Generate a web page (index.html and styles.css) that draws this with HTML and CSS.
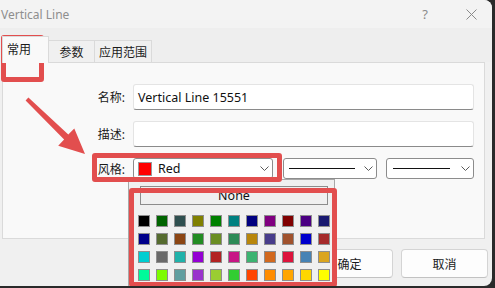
FILE: index.html
```html
<!DOCTYPE html>
<html>
<head>
<meta charset="utf-8">
<link rel="stylesheet" href="styles.css">
</head>
<body>
<div class="window">
  <div class="titlebar">
    <span class="title">Vertical Line</span>
    <span class="cap-btn help">?</span>
    <span class="cap-btn close">
      <svg width="11" height="11" viewBox="0 0 11 11"><path d="M0.5 0.5 L10.5 10.5 M10.5 0.5 L0.5 10.5" stroke="#8a8a8a" stroke-width="1" fill="none"/></svg>
    </span>
  </div>
  <div class="tabs">
    <div class="tab active">常用</div>
    <div class="tab t2">参数</div>
    <div class="tab t3">应用范围</div>
  </div>
  <div class="panel">
    <div class="row">
      <label class="lbl">名称:</label>
      <div class="input">Vertical Line 15551</div>
    </div>
    <div class="row">
      <label class="lbl">描述:</label>
      <div class="input"></div>
    </div>
    <div class="row row-style">
      <label class="lbl">风格:</label>
      <div class="combo c1">
        <span class="swatch-red"></span>
        <span class="combo-text">Red</span>
        <svg class="chev" width="9" height="5" viewBox="0 0 9 5"><path d="M0.5 0.5 L4.5 4.5 L8.5 0.5" stroke="#5a5a5a" stroke-width="1" fill="none"/></svg>
      </div>
      <div class="combo c2">
        <span class="line-sample"></span>
        <svg class="chev" width="9" height="5" viewBox="0 0 9 5"><path d="M0.5 0.5 L4.5 4.5 L8.5 0.5" stroke="#5a5a5a" stroke-width="1" fill="none"/></svg>
      </div>
      <div class="combo c3">
        <span class="line-sample"></span>
        <svg class="chev" width="9" height="5" viewBox="0 0 9 5"><path d="M0.5 0.5 L4.5 4.5 L8.5 0.5" stroke="#5a5a5a" stroke-width="1" fill="none"/></svg>
      </div>
    </div>
  </div>
  <div class="footer">
    <div class="btn">确定</div>
    <div class="btn">取消</div>
  </div>

  <div class="popup">
    <div class="none-btn">None</div>
    <div class="palette">
      <span class="sw" style="background:#000000"></span>
      <span class="sw" style="background:#006400"></span>
      <span class="sw" style="background:#2f4f4f"></span>
      <span class="sw" style="background:#808000"></span>
      <span class="sw" style="background:#008000"></span>
      <span class="sw" style="background:#008080"></span>
      <span class="sw" style="background:#000080"></span>
      <span class="sw" style="background:#800080"></span>
      <span class="sw" style="background:#800000"></span>
      <span class="sw" style="background:#4b0082"></span>
      <span class="sw" style="background:#191970"></span>
      <span class="sw" style="background:#00008b"></span>
      <span class="sw" style="background:#556b2f"></span>
      <span class="sw" style="background:#8b4513"></span>
      <span class="sw" style="background:#228b22"></span>
      <span class="sw" style="background:#6b8e23"></span>
      <span class="sw" style="background:#2e8b57"></span>
      <span class="sw" style="background:#b8860b"></span>
      <span class="sw" style="background:#483d8b"></span>
      <span class="sw" style="background:#a0522d"></span>
      <span class="sw" style="background:#0000cd"></span>
      <span class="sw" style="background:#a52a2a"></span>
      <span class="sw" style="background:#00ced1"></span>
      <span class="sw" style="background:#696969"></span>
      <span class="sw" style="background:#20b2aa"></span>
      <span class="sw" style="background:#9400d3"></span>
      <span class="sw" style="background:#b22222"></span>
      <span class="sw" style="background:#c71585"></span>
      <span class="sw" style="background:#3cb371"></span>
      <span class="sw" style="background:#d2691e"></span>
      <span class="sw" style="background:#dc143c"></span>
      <span class="sw" style="background:#4682b4"></span>
      <span class="sw" style="background:#daa520"></span>
      <span class="sw" style="background:#00fa9a"></span>
      <span class="sw" style="background:#7cfc00"></span>
      <span class="sw" style="background:#5f9ea0"></span>
      <span class="sw" style="background:#9932cc"></span>
      <span class="sw" style="background:#9acd32"></span>
      <span class="sw" style="background:#32cd32"></span>
      <span class="sw" style="background:#ff4500"></span>
      <span class="sw" style="background:#ff8c00"></span>
      <span class="sw" style="background:#ffa500"></span>
      <span class="sw" style="background:#ffd700"></span>
      <span class="sw" style="background:#ffff00"></span>
    </div>
  </div>

  <div class="mark mark-tab"></div>
  <div class="mark mark-style"></div>
  <div class="mark mark-popup"></div>
  <svg class="arrow" width="100" height="170" viewBox="0 0 100 170">
    <polygon points="28.4,97.6 68.3,134.6 74.3,128.4 85,154 58.2,145.8 64.1,139.6 25.6,100.4" fill="#e24e4e"/>
  </svg>
</div>
</body>
</html>
```

FILE: styles.css
```css
* { box-sizing: border-box; }
html, body { margin: 0; padding: 0; }
body {
  background: #2a2a2a;
  width: 495px;
  height: 288px;
  overflow: hidden;
  font-family: "Noto Sans", "Noto Sans CJK SC", sans-serif;
  font-size: 12px;
  color: #1b1b1b;
}
.window {
  position: relative;
  width: 492px;
  height: 286px;
  background: #f0f0f0;
  border-radius: 0 8px 8px 0;
  overflow: hidden;
  display: flex;
  flex-direction: column;
}
.titlebar {
  height: 28px;
  flex: none;
  background: #f3f3f3;
  display: flex;
  align-items: center;
}
.title {
  flex: 1;
  padding-left: 1px;
  color: #8e8e8e;
  font-size: 12px;
}
.cap-btn {
  width: 46px;
  height: 28px;
  display: flex;
  align-items: center;
  justify-content: center;
  color: #8a8a8a;
  font-size: 13px;
}
.close { margin-right: -2px; }
.tabs {
  height: 34px;
  flex: none;
  display: flex;
  align-items: flex-end;
  padding-left: 2px;
  background: #eeeeee;
}
.tab {
  height: 22px;
  display: flex;
  align-items: center;
  justify-content: center;
  border: 1px solid #dadada;
  border-bottom: none;
  background: #f0f0f0;
  margin-left: -1px;
}
.tab.active {
  height: 27px;
  width: 47px;
  margin-left: 0;
  background: #f9f9f9;
  margin-bottom: -1px;
  position: relative;
  z-index: 1;
  justify-content: flex-start;
  padding-left: 4px;
  padding-bottom: 2px;
}
.t2 { width: 47px; }
.t3 { width: 58px; }
.panel {
  height: 177px;
  flex: none;
  margin: 0 7px 0 2px;
  background: #f9f9f9;
  border: 1px solid #dadada;
  padding: 21px 10px 0 82px;
  display: flex;
  flex-direction: column;
  gap: 11px;
}
.row {
  display: flex;
  align-items: center;
}
.lbl {
  width: 40px;
  text-align: right;
  margin-right: 8px;
  color: #1a1a1a;
}
.input {
  width: 341px;
  height: 26px;
  background: #ffffff;
  border: 1px solid #e4e4e4;
  border-bottom-color: #8a8a8a;
  border-radius: 3px;
  padding-left: 4px;
  display: flex;
  align-items: center;
  font-size: 12.5px;
  color: #111;
}
.row-style { height: 21px; }
.combo {
  height: 21px;
  background: #ffffff;
  border: 1px solid #8c8c8c;
  border-radius: 3px;
  display: flex;
  align-items: center;
  position: relative;
}
.c1 { width: 140px; padding-left: 4px; }
.c2 { width: 95px; margin-left: 10px; padding-left: 5px; }
.c3 { width: 88px; margin-left: 9px; padding-left: 6px; }
.swatch-red {
  width: 14px;
  height: 14px;
  background: #ff0000;
  border: 1px solid #9a9a9a;
  flex: none;
}
.combo-text {
  margin-left: 6px;
  font-size: 12.5px;
  color: #111;
}
.line-sample {
  height: 1px;
  background: #111;
  flex: none;
}
.c2 .line-sample { width: 66px; }
.c3 .line-sample { width: 57px; }
.chev {
  position: absolute;
  right: 3px;
  top: 7px;
}
.footer {
  flex: 1;
  display: flex;
  justify-content: flex-end;
  padding: 10px 4px 0 0;
  gap: 8px;
}
.btn {
  width: 87px;
  height: 29px;
  background: #fdfdfd;
  border: 1px solid #d4d4d4;
  border-bottom-color: #c2c2c2;
  border-radius: 4px;
  display: flex;
  align-items: center;
  justify-content: center;
  color: #1a1a1a;
}
.popup {
  position: absolute;
  left: 128px;
  top: 179px;
  width: 207px;
  height: 120px;
  background: #f0f0f0;
  border: 1px solid #a8a8a8;
  padding: 6px 0 0 11px;
}
.none-btn {
  width: 188px;
  height: 19px;
  border: 1px solid #8c8c8c;
  background: #f0f0f0;
  display: flex;
  align-items: center;
  justify-content: center;
  font-size: 12.5px;
  color: #111;
}
.palette {
  margin: 10px 0 0 -2px;
  display: grid;
  grid-template-columns: repeat(11, 12px);
  grid-auto-rows: 12px;
  gap: 6px;
}
.sw {
  display: block;
  border: 1px solid #8e8e8e;
}
.mark {
  position: absolute;
  border: 5px solid #e24e4e;
  border-radius: 3px;
}
.mark-tab { left: 1px; top: 35px; width: 43px; height: 47px; }
.mark-style { left: 92px; top: 153px; width: 190px; height: 29px; }
.mark-popup { left: 129px; top: 188px; width: 208px; height: 99px; }
.arrow {
  position: absolute;
  left: 0;
  top: 0;
}
```
